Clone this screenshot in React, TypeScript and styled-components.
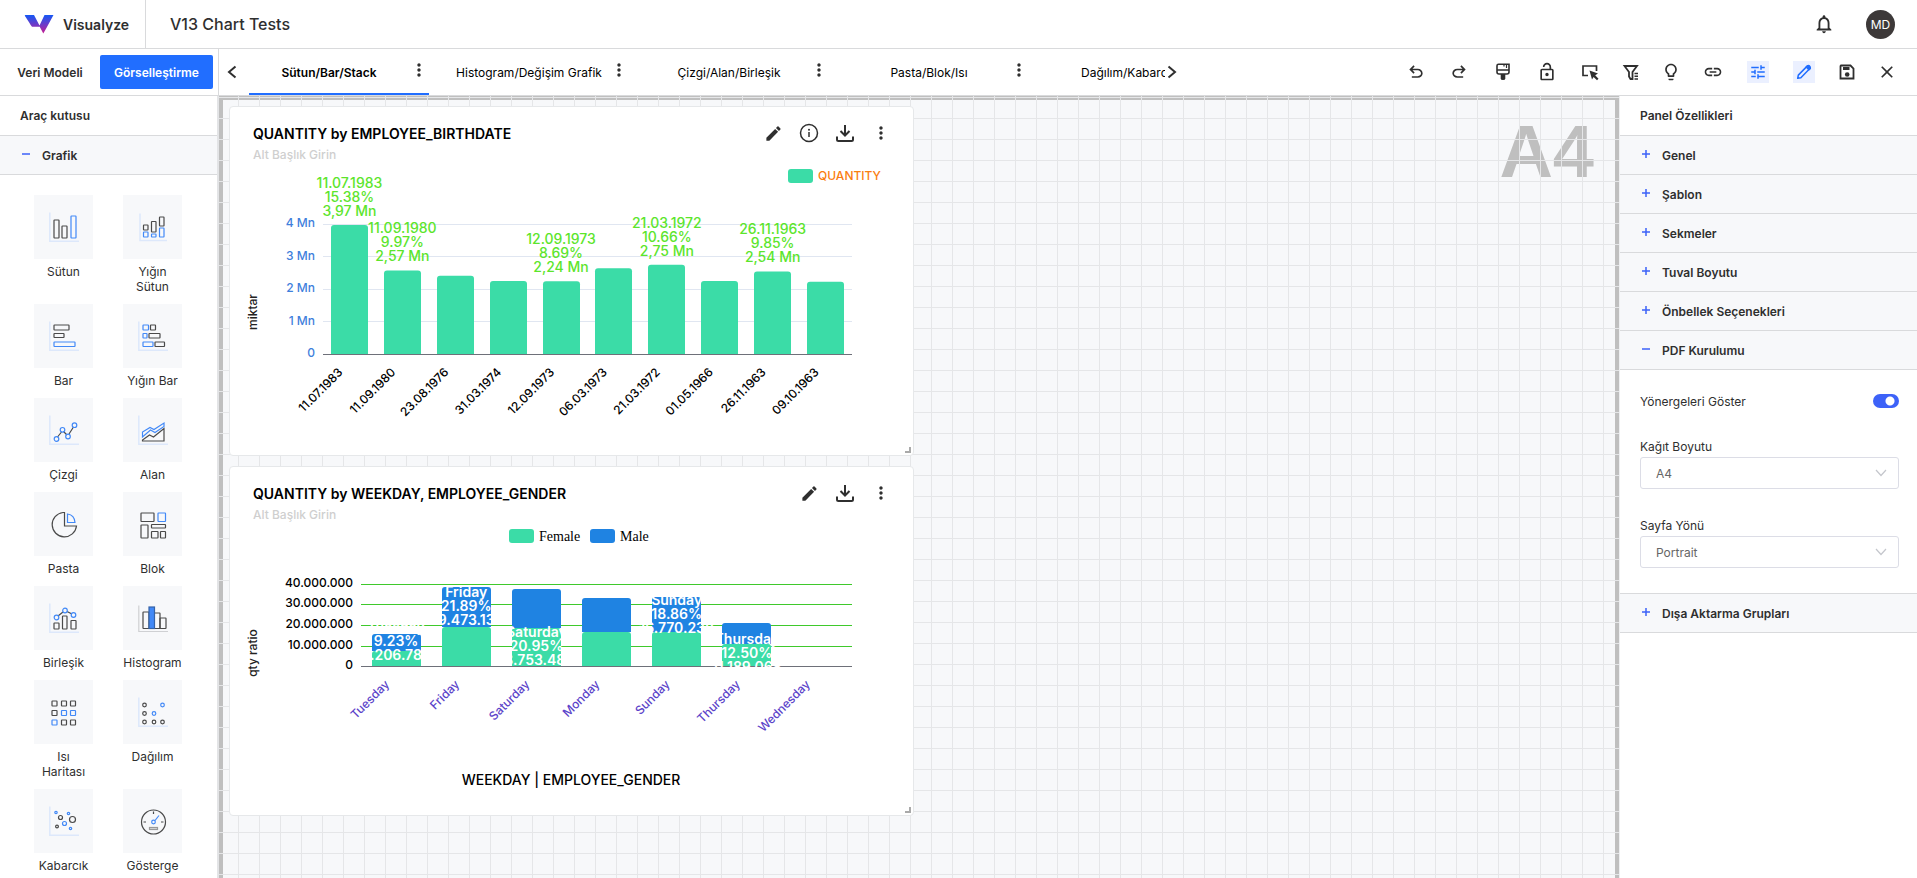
import React from 'react';
import styled, { createGlobalStyle, css } from 'styled-components';
import {
  MdClose,
  MdEdit,
  MdLightbulbOutline,
  MdLink,
  MdMoreVert,
  MdNotificationsNone,
  MdOutlineLockOpen,
  MdTune,
} from 'react-icons/md';

const font = 'Inter, "Liberation Sans", sans-serif';
const c = {
  text: '#2f2f2f',
  line: '#d9dadc',
  soft: '#f7f8fa',
  blue: '#216eff',
  accent: '#3d62f8',
  band: '#bfbfbf',
  grid: '#e5e6e8',
  green: '#3bdca7',
  male: '#1f83e2',
};

const GlobalStyle = createGlobalStyle`
  *, *::before, *::after { box-sizing: border-box; }
  body {
    margin: 0;
    font-family: ${font};
    font-size: 12px;
    color: ${c.text};
    background: #fff;
    overflow: hidden;
  }
  button, select, input { font: inherit; color: inherit; }
  h1, h2, h3, p, ul { margin: 0; padding: 0; }
`;

const Page = styled.div`
  display: flex;
  flex-direction: column;
  height: 100vh;
`;

/* ---------- header ---------- */

const Header = styled.header`
  display: flex;
  align-items: center;
  flex: none;
  height: 49px;
  border-bottom: 1px solid ${c.line};
`;

const Brand = styled.a`
  display: flex;
  align-items: center;
  gap: 9px;
  width: 146px;
  height: 100%;
  padding-left: 24px;
  border-right: 1px solid ${c.line};
  font-size: 14px;
  font-weight: 600;
  color: inherit;
  text-decoration: none;
`;

const DocumentTitle = styled.h1`
  flex: 1;
  padding-left: 24px;
  font-size: 16px;
  font-weight: 500;
`;

const Avatar = styled.button`
  width: 29px;
  height: 29px;
  margin: 0 22px 0 30px;
  padding: 0;
  border: 0;
  border-radius: 50%;
  background: #3d3939;
  color: #fff;
  font-size: 12px;
`;

/* ---------- toolbar ---------- */

const Toolbar = styled.div`
  display: flex;
  flex: none;
  height: 47px;
  border-bottom: 1px solid ${c.line};
`;

const ModeSwitch = styled.nav`
  display: flex;
  align-items: center;
  flex: none;
  width: 219px;
  border-right: 1px solid ${c.line};
`;

const ModeButton = styled.button<{ $active?: boolean }>`
  height: 34px;
  padding: 0;
  border: 0;
  border-radius: 2px;
  width: ${(p) => (p.$active ? 113 : 100)}px;
  background: ${(p) => (p.$active ? c.blue : 'transparent')};
  color: ${(p) => (p.$active ? '#fff' : c.text)};
  font-weight: 600;
`;

const IconButton = styled.button<{ $w?: number; $active?: boolean }>`
  display: flex;
  align-items: center;
  justify-content: center;
  flex: none;
  width: ${(p) => p.$w ?? 24}px;
  height: 24px;
  padding: 0;
  border: 0;
  background: transparent;
  color: ${(p) => (p.$active ? c.blue : c.text)};

  svg {
    flex: none;
    ${(p) =>
      p.$active &&
      css`
        padding: 2px;
        background: #ebf0ff;
      `}
  }
`;

const TabArea = styled.div`
  display: flex;
  align-items: center;
  flex: 1;
  min-width: 0;
  padding-left: 1px;
`;

const TabList = styled.div`
  display: flex;
  gap: 20px;
  height: 100%;
  width: 916px;
  margin: 0 -5px 0 5px;
  min-width: 0;
  overflow: hidden;
`;

const TabItem = styled.div<{ $active?: boolean }>`
  display: flex;
  align-items: center;
  position: relative;
  flex: none;
  width: 180px;
  border-bottom: 2px solid ${(p) => (p.$active ? c.blue : 'transparent')};
`;

const TabButton = styled.button<{ $active?: boolean }>`
  flex: 1;
  padding: 2px 20px 0 0;
  border: 0;
  background: transparent;
  color: #000;
  font-weight: ${(p) => (p.$active ? 600 : 400)};
  white-space: nowrap;
`;

const TabMenu = styled.button`
  position: absolute;
  right: 0;
  top: 11px;
  display: flex;
  padding: 0;
  border: 0;
  background: transparent;
`;

const Tools = styled.div`
  display: flex;
  align-items: center;
  flex: none;
  gap: 20px;
  padding: 0 20px;
`;

/* ---------- body ---------- */

const Body = styled.div`
  display: flex;
  flex: 1;
  min-height: 0;
`;

const Sidebar = styled.aside`
  flex: none;
  width: 219px;
  border-right: 2px solid #e3e4e6;
  overflow: hidden;
`;

const Properties = styled.aside`
  flex: none;
  width: 298px;
  border-left: 1px solid #eeeff1;
  overflow: hidden;
`;

const PanelTitle = styled.h2`
  height: 40px;
  padding-left: 20px;
  border-bottom: 1px solid ${c.line};
  font-size: 12px;
  font-weight: 600;
  line-height: 40px;
`;

const SectionButton = styled.button`
  display: flex;
  align-items: center;
  gap: 11px;
  width: 100%;
  height: 39px;
  padding: 0 0 0 21px;
  border: 0;
  border-bottom: 1px solid ${c.line};
  background: ${c.soft};
  font-weight: 600;
  text-align: left;
`;

const ChartTypes = styled.ul`
  display: grid;
  grid-template-columns: repeat(2, 59px);
  justify-content: center;
  column-gap: 30px;
  padding: 20px 1px 0 0;
  list-style: none;
`;

const ChartType = styled.button`
  display: flex;
  flex-direction: column;
  align-items: center;
  gap: 5px;
  width: 59px;
  padding: 0 0 10px;
  border: 0;
  background: transparent;
  line-height: 15px;
`;

const Tile = styled.span`
  display: grid;
  place-items: center;
  width: 59px;
  height: 64px;
  background: ${c.soft};
`;

const Settings = styled.div`
  padding: 20px 18px 25px 20px;
  border-bottom: 1px solid ${c.line};
`;

const SwitchRow = styled.label`
  display: flex;
  align-items: center;
  justify-content: space-between;
  height: 22px;
  margin-bottom: 26px;
`;

const Switch = styled.input`
  appearance: none;
  width: 26px;
  height: 14px;
  margin: 0;
  border-radius: 7px;
  background: radial-gradient(circle at 17px 7px, #fff 4px, ${c.accent} 5px);
`;

const Field = styled.div`
  position: relative;
  display: flex;
  flex-direction: column;
  gap: 1px;
  & + & { margin-top: 28px; }
  label { line-height: 18px; }
  svg { position: absolute; right: 12px; bottom: 11px; pointer-events: none; }
`;

const Select = styled.select`
  appearance: none;
  height: 32px;
  padding: 0 15px;
  border: 1px solid #dcdde6;
  border-radius: 3px;
  background: #fff;
  color: #666;
`;

/* ---------- canvas ---------- */

const Canvas = styled.main`
  position: relative;
  flex: 1;
  min-width: 0;
  display: grid;
  grid-template-columns: repeat(2, minmax(0, 1fr));
  align-content: start;
  gap: 10px;
  padding: 10px;
  background: ${c.soft};
  overflow: hidden;
`;

const Paper = styled.div`
  position: absolute;
  inset: 0;
  border: 4px solid ${c.band};
  border-bottom: 0;
  padding: 11px 21px 0;
  color: ${c.band};
  font: bold 74px/82px "Liberation Sans", sans-serif;
  text-align: right;
`;

const GridLines = styled.div`
  position: absolute;
  inset: 0;
  background-image: linear-gradient(${c.grid} 1px, transparent 1px),
    linear-gradient(90deg, ${c.grid} 1px, transparent 1px);
  background-size: 21px 21px;
  background-position: 19px 1px;
`;

const Card = styled.section`
  position: relative;
  grid-column: 1;
  border: 1px solid #e6e8ea;
  border-radius: 4px;
  background: #fff;
`;

const CardHead = styled.div`
  display: flex;
  justify-content: space-between;
  height: 56px;
  padding: 14px 20px 0 23px;
`;

const CardTitle = styled.h3`
  font-size: 14px;
  font-weight: 600;
  line-height: 26px;
  color: #000;
`;

const CardSubtitle = styled.p`
  font-size: 12px;
  font-weight: 500;
  line-height: 16px;
  color: #cfcfcf;
`;

const CardActions = styled.div`
  display: flex;
  gap: 12px;
`;

const Chart = styled.svg`
  display: block;
  width: 100%;
  height: 292px;
  font-family: ${font};
  font-weight: 500;
`;

const ResizeHandle = styled.span`
  position: absolute;
  right: 2px;
  bottom: 2px;
  width: 6px;
  height: 6px;
  border-right: 2px solid #aaa;
  border-bottom: 2px solid #aaa;
`;

/* ---------- icons ---------- */

const Logo = () => (
  <svg width="30" height="20" viewBox="0 0 30 20" aria-hidden="true">
    <defs>
      <linearGradient id="logo" x1="0" y1="0" x2="0" y2="1">
        <stop offset="0" stopColor="#1458f5" />
        <stop offset="0.55" stopColor="#7338c4" />
        <stop offset="1" stopColor="#c81e92" />
      </linearGradient>
    </defs>
    <path
      fill="url(#logo)"
      d="M1.500 1H10L15.500 11.500 20.500 1H29.500L22.300 14.200 19.300 19.500 15.700 12.800H8Q6.500 11 5.500 9L.8 1.800Q.7 1 1.500 1Z"
    />
  </svg>
);

const Symbol = ({ d, size = 20 }: { d: string; size?: number }) => (
  <svg width={size} height={size} viewBox="0 -960 960 960" fill="currentColor" aria-hidden="true">
    <path d={d} />
  </svg>
);

const undoPath =
  'M280-200v-80h284q63 0 109.500-40T720-420q0-60-46.500-100T564-560H312l104 104-56 56-200-200 200-200 56 56-104 104h252q97 0 163.500 63T800-420q0 94-66.500 157T564-200H280Z';
const redoPath =
  'M396-200q-97 0-163.500-63T160-420q0-94 66.500-157T396-640h252L544-744l56-56 200 200-200 200-56-56 104-104H396q-63 0-109.500 40T240-420q0 60 46.500 100T396-280h284v80H396Z';

const BrushIcon = () => (
  <svg width="18" height="20" viewBox="0 0 18 20" fill="none" stroke="currentColor" strokeWidth="1.600">
    <path d="M4.500 2.300H15V10Q15 12 13 12H5Q3 12 3 10V3.800Q3 2.300 4.500 2.300Z M3 8H15" />
    <path d="M10 2.300V4.500 M12.500 2.300V6" strokeWidth="1.200" />
    <path d="M6.700 12H11.300V16.500Q11.300 18 9 18 6.700 18 6.700 16.500Z" fill="currentColor" stroke="none" />
  </svg>
);

const SelectIcon = () => (
  <svg width="20" height="20" viewBox="0 0 20 20" fill="none" stroke="currentColor" strokeWidth="1.700">
    <path d="M8 13.500H3V4H16.500V9" />
    <path d="M9.500 8.500L18 11.500 15.200 13.300 18.500 16.700 17 18.300 13.600 14.900 12 17.500Z" fill="currentColor" stroke="none" />
  </svg>
);

const FilterIcon = () => (
  <svg width="20" height="20" viewBox="0 0 20 20" fill="none" stroke="currentColor" strokeWidth="1.800">
    <path d="M3.500 4H16L11.500 10V17H9.500L8 14.500V10Z" />
    <path d="M13.500 11.500H17 M13.500 14.200H17 M13.500 17H17" strokeWidth="1.500" />
  </svg>
);

const SaveIcon = () => (
  <svg width="20" height="20" viewBox="0 0 20 20" fill="none" stroke="currentColor" strokeWidth="1.800">
    <path d="M4 3.500H13.500L16.500 6.500V16.500H3.500V4Z" />
    <path d="M6 5H12.500V8H6Z" fill="currentColor" stroke="none" />
    <circle cx="10.200" cy="12.500" r="2.300" fill="currentColor" stroke="none" />
  </svg>
);

const PenIcon = () => (
  <svg width="22" height="22" viewBox="0 0 20 20" fill="none" stroke="currentColor" strokeWidth="1.700" strokeLinejoin="round">
    <path d="M3 17L3.700 13.500 13.800 3.200Q15 2.400 16.200 3.600 17.500 5 16.500 6.200L6.500 16.300Z" />
    <path d="M12.500 4.500L15.500 7.500 17 6 16 3.500 14.200 3Z" fill="currentColor" />
  </svg>
);

const InfoIcon = () => (
  <svg width="20" height="20" viewBox="0 0 20 20" fill="none" stroke="currentColor" strokeWidth="1.500">
    <circle cx="10" cy="10" r="8.500" />
    <path d="M10 9V14" />
    <circle cx="10" cy="6.800" r="1" fill="currentColor" stroke="none" />
  </svg>
);

const DownloadIcon = () => (
  <svg width="20" height="20" viewBox="0 0 20 20" fill="none" stroke="currentColor" strokeWidth="2">
    <path d="M10 2V12 M5.500 8L10 12.500 14.500 8" />
    <path d="M2 13.500V16.500Q2 18 3.500 18H16.500Q18 18 18 16.500V13.500" />
  </svg>
);

const ChevronIcon = ({ right }: { right?: boolean }) => (
  <svg width="12" height="14" viewBox="0 0 12 14" fill="none" stroke="currentColor" strokeWidth="2">
    <path d={right ? 'M2.500 1.500L9 7 2.500 12.500' : 'M9.500 1.500L3 7 9.500 12.500'} />
  </svg>
);

const CaretIcon = () => (
  <svg width="12" height="10" viewBox="0 0 12 10" fill="none" stroke="#c4c6cc" strokeWidth="1.200">
    <path d="M1 2L6 7.500 11 2" />
  </svg>
);

const ToggleIcon = ({ open }: { open?: boolean }) => (
  <svg width="10" height="12" viewBox="0 0 10 12" stroke={c.accent} strokeWidth="1.500" aria-hidden="true">
    <path d={open ? 'M1 5H9' : 'M1 5H9 M5 1V9'} />
  </svg>
);

const axisPath = <path d="M.8 .5V29.300H30" stroke="#dde8fb" strokeWidth="1.500" />;
const D = '#4a4a4a';
const B = '#4289f7';

const rects = (list: number[][], stroke: string) =>
  list.map(([x, y, w, h]) => (
    <rect key={`${x}-${y}`} x={x} y={y} width={w} height={h} rx="0.500" stroke={stroke} />
  ));
const dots = (list: number[][], stroke: string) =>
  list.map(([x, y, r]) => <circle key={`${x}-${y}`} cx={x} cy={y} r={r} stroke={stroke} />);

const chartTypes: { name: string; icon: React.ReactNode }[] = [
  {
    name: 'Sütun',
    icon: <>{axisPath}{rects([[5, 8, 5, 18], [13, 14, 5, 12]], D)}{rects([[22, 4, 5, 22]], B)}</>,
  },
  {
    name: 'Yığın Sütun',
    icon: (
      <>
        <path d="M2 1.500V28.500H29" stroke="#dde8fb" strokeWidth="1.500" />
        {rects([[5.500, 13, 4.500, 5], [13.500, 9.500, 4.500, 10.500], [21.500, 5, 4.500, 9]], D)}
        {rects([[5.500, 20, 4.500, 5], [13.500, 22, 4.500, 3], [21.500, 16, 4.500, 9]], B)}
      </>
    ),
  },
  {
    name: 'Bar',
    icon: <>{axisPath}{rects([[5, 4, 15, 5], [5, 12.500, 10, 4]], D)}{rects([[5, 21, 21, 4.500]], B)}</>,
  },
  {
    name: 'Yığın Bar',
    icon: (
      <>
        {axisPath}
        {rects([[12.500, 4, 5, 5], [11, 12.500, 11, 4.500], [17, 21, 9.500, 4.500]], D)}
        {rects([[5, 4, 5.500, 5], [5, 12.500, 4, 4.500], [5, 21, 10, 4.500]], B)}
      </>
    ),
  },
  {
    name: 'Çizgi',
    icon: (
      <>
        {axisPath}
        <path d="M8.500 22L12.500 17 M14.500 16.500L18 20 M20 19L24.500 12" stroke={D} />
        {dots([[7.500, 24, 2.300], [13.500, 14.800, 2.300], [19, 21.500, 2.300], [25.500, 10.200, 2.300]], B)}
      </>
    ),
  },
  {
    name: 'Alan',
    icon: (
      <>
        {axisPath}
        <path d="M4.500 22V17L12 12.500 16 14.500 26 8V11.500L17 17.500 12.500 15Z" stroke={B} />
        <path d="M4.500 26V25L11.500 20 15.500 22 26 13.500V26Z" stroke={D} />
      </>
    ),
  },
  {
    name: 'Pasta',
    icon: (
      <>
        <path d="M14 3.500A12.200 12.200 0 1 0 27.500 17H15.500V3.500Z" stroke={D} />
        <path d="M18.500 5Q25.500 6 26 13.500H18.500Z" stroke={B} />
      </>
    ),
  },
  {
    name: 'Blok',
    icon: (
      <>
        {rects([[3, 4, 13, 8.500], [3, 16, 7, 13], [13.500, 15.500, 14, 3.500], [13.500, 22.500, 6.500, 6.500], [22.500, 22.500, 5, 6.500]], D)}
        {rects([[20, 4, 7.500, 8.500]], B)}
      </>
    ),
  },
  {
    name: 'Birleşik',
    icon: (
      <>
        {axisPath}
        <path d="M9 13L14 9 M18 8.500L23 11" stroke={D} />
        {rects([[5, 20, 5, 6], [13.500, 13, 4.500, 13], [22, 17.500, 5, 8.500]], D)}
        {dots([[7.500, 14.500, 2.300], [16, 7.500, 2.300], [24.500, 12, 2.300]], B)}
      </>
    ),
  },
  {
    name: 'Histogram',
    icon: (
      <>
        <path d="M.8 2.500V28.500H30" stroke="#cfd0d3" />
        {rects([[5, 9, 6, 16.500], [16, 10, 6, 15.500], [22, 15, 6, 10.500]], D)}
        <rect x="11" y="4" width="5.500" height="21.500" fill={B} stroke="#3563a8" />
      </>
    ),
  },
  {
    name: 'Isı Haritası',
    icon: (
      <>
        {rects([[3, 4, 5, 5], [12.500, 4, 5, 5], [21.500, 4, 5, 5], [3, 13.500, 5, 5], [12.500, 23, 5, 5], [21.500, 23, 5, 5]], D)}
        {rects([[12.500, 13.500, 5, 5], [21.500, 13.500, 5, 5], [3, 23, 5, 5]], B)}
      </>
    ),
  },
  {
    name: 'Dağılım',
    icon: (
      <>
        {axisPath}
        {dots([[6.500, 8, 1.800], [6.500, 16.500, 1.800], [6.500, 25, 1.800], [16, 25, 1.800], [24.500, 25, 1.800]], D)}
        {dots([[24.500, 8, 1.800], [16, 16.500, 1.800]], B)}
      </>
    ),
  },
  {
    name: 'Kabarcık',
    icon: (
      <>
        {axisPath}
        {dots([[11.500, 11.500, 2], [23.500, 13.500, 3], [8, 20.500, 1.400]], D)}
        {dots([[7, 6.500, 1.200], [19.500, 7.500, 1.200], [15.500, 17.500, 2], [21.500, 22.500, 1.200]], B)}
      </>
    ),
  },
  {
    name: 'Gösterge',
    icon: (
      <>
        <circle cx="15.500" cy="16" r="12" stroke={D} />
        <path d="M15.500 5.500V8 M5.500 16H8 M23 16H25.500" stroke={D} />
        <path d="M17 14.500L21 9.500" stroke={B} />
        <circle cx="15.500" cy="16" r="1.800" stroke={B} />
        <rect x="11.500" y="21.500" width="8" height="2" fill="#ddd" stroke="#999" />
      </>
    ),
  },
];

/* ---------- charts ---------- */

const birthdates: { date: string; value: number; label?: string[] }[] = [
  { date: '11.07.1983', value: 3.97, label: ['15.38%', '3,97 Mn'] },
  { date: '11.09.1980', value: 2.57, label: ['9.97%', '2,57 Mn'] },
  { date: '23.08.1976', value: 2.41 },
  { date: '31.03.1974', value: 2.25 },
  { date: '12.09.1973', value: 2.24, label: ['8.69%', '2,24 Mn'] },
  { date: '06.03.1973', value: 2.64 },
  { date: '21.03.1972', value: 2.75, label: ['10.66%', '2,75 Mn'] },
  { date: '01.05.1966', value: 2.25 },
  { date: '26.11.1963', value: 2.54, label: ['9.85%', '2,54 Mn'] },
  { date: '09.10.1963', value: 2.22 },
];

const topRounded = (x: number, y: number, w: number, h: number) =>
  `M${x} ${y + h}V${y + 3}q0-3 3-3h${w - 6}q3 0 3 3V${y + h}Z`;

function BirthdateChart() {
  const left = 93;
  const right = 622;
  const base = 191;
  const unit = 32.5;
  const step = (right - left) / birthdates.length;
  return (
    <Chart viewBox="0 0 683 292" role="img" aria-label="QUANTITY by EMPLOYEE_BIRTHDATE">
      <rect x="558" y="6" width="25" height="14" rx="3" fill={c.green} />
      <text x="588" y="17" fontSize="12" fill="#fa7d0f">QUANTITY</text>
      {[0, 1, 2, 3, 4].map((v) => (
        <g key={v}>
          {v > 0 && (
            <path d={`M${left} ${Math.floor(base - v * unit) + 0.5}H${right}`} stroke="#e0e6f1" />
          )}
          <text x="85" y={base - v * unit + 3} fontSize="12" fill="#3f80dc" textAnchor="end">
            {v ? `${v} Mn` : '0'}
          </text>
        </g>
      ))}
      {birthdates.map((b, i) => {
        const mid = left + step * (i + 0.5);
        const h = b.value * unit;
        return (
          <path key={b.date} d={topRounded(Math.round(mid - 18.5), base - h, 37, h)} fill={c.green} />
        );
      })}
      <path d={`M${left} ${base + 0.5}H${right}`} stroke="#6e7079" />
      {birthdates.map((b, i) => {
        const mid = left + step * (i + 0.5);
        const top = base - b.value * unit;
        const end = mid - 6;
        return (
          <g key={b.date}>
            {b.label &&
              [b.date, ...b.label].map((t, n) => (
                <text key={t} x={mid} y={top - 37 + n * 14} fontSize="14" fill="#5ce52c" textAnchor="middle">
                  {t}
                </text>
              ))}
            <text
              x={end}
              y={base + 19}
              transform={`rotate(-45 ${end} ${base + 19})`}
              fontSize="12"
              fill="#000"
              textAnchor="end"
            >
              {b.date}
            </text>
          </g>
        );
      })}
      <text x="27" y="149" transform="rotate(-90 27 149)" fontSize="12" fill="#222" textAnchor="middle">
        miktar
      </text>
    </Chart>
  );
}

const weekdays: { day: string; top: number; split: number; base?: number; label?: string[] }[] = [
  { day: 'Tuesday', top: 111, split: 128, base: 109, label: ['9.23%', '8.206.788'] },
  { day: 'Friday', top: 64, split: 104, base: 74, label: ['21.89%', '19.473.131'] },
  { day: 'Saturday', top: 66, split: 105, base: 114, label: ['20.95%', '18.753.488'] },
  { day: 'Monday', top: 75, split: 109 },
  { day: 'Sunday', top: 74, split: 109, base: 82, label: ['18.86%', '16.770.238'] },
  { day: 'Thursday', top: 100, split: 121, base: 121, label: ['12.50%', '11.189.068'] },
  { day: 'Wednesday', top: 143, split: 143 },
];

function WeekdayChart() {
  const left = 131;
  const right = 622;
  const base = 143;
  const step = (right - left) / weekdays.length;
  const lines = [
    { y: 61, label: '40.000.000' },
    { y: 81, label: '30.000.000' },
    { y: 102, label: '20.000.000' },
    { y: 123, label: '10.000.000' },
    { y: base, label: '0' },
  ];
  return (
    <Chart viewBox="0 0 683 292" role="img" aria-label="QUANTITY by WEEKDAY, EMPLOYEE_GENDER">
      <rect x="279" y="6" width="25" height="14" rx="3" fill={c.green} />
      <rect x="360" y="6" width="25" height="14" rx="3" fill={c.male} />
      <g fontFamily='"Liberation Serif", serif' fontWeight="400" fontSize="14" fill="#000">
        <text x="309" y="18">Female</text>
        <text x="390" y="18">Male</text>
      </g>
      {lines.map((l) => (
        <g key={l.label}>
          {l.y < base && <path d={`M${left} ${l.y + 0.5}H${right}`} stroke="#3fc92c" />}
          <text x="123" y={l.y + 3} fontSize="12" fill="#000" textAnchor="end">
            {l.label}
          </text>
        </g>
      ))}
      {weekdays.map((d, i) => {
        const x = Math.round(left + step * (i + 0.5) - 24.5);
        return d.top < base ? (
          <g key={d.day}>
            <path d={topRounded(x, d.top, 49, d.split - d.top)} fill={c.male} />
            <path d={topRounded(x, d.split, 49, base - d.split)} fill={c.green} />
          </g>
        ) : null;
      })}
      <path d={`M${left} ${base + 0.5}H${right}`} stroke="#6e7079" />
      {weekdays.map((d, i) => {
        const mid = left + step * (i + 0.5);
        const end = mid - 6;
        return (
          <g key={d.day}>
            {d.label &&
              [d.day, ...d.label].map((t, n) => (
                <text
                  key={t}
                  x={mid}
                  y={(d.base ?? 0) + n * 14}
                  fontSize="14"
                  fontWeight="600"
                  fill="#fff"
                  textAnchor="middle"
                >
                  {t}
                </text>
              ))}
            <text
              x={end}
              y={base + 19}
              transform={`rotate(-45 ${end} ${base + 19})`}
              fontSize="12"
              fill="#5b43c9"
              textAnchor="end"
            >
              {d.day}
            </text>
          </g>
        );
      })}
      <text x="27" y="130" transform="rotate(-90 27 130)" fontSize="12" fill="#222" textAnchor="middle">
        qty ratio
      </text>
      <text x="341" y="262" fontSize="14" fill="#000" textAnchor="middle">
        WEEKDAY | EMPLOYEE_GENDER
      </text>
    </Chart>
  );
}

function ChartCard(props: { title: string; info?: boolean; children: React.ReactNode }) {
  return (
    <Card>
      <CardHead>
        <div>
          <CardTitle>{props.title}</CardTitle>
          <CardSubtitle>Alt Başlık Girin</CardSubtitle>
        </div>
        <CardActions>
          <IconButton aria-label="Düzenle"><MdEdit size={19} /></IconButton>
          {props.info && <IconButton aria-label="Bilgi"><InfoIcon /></IconButton>}
          <IconButton aria-label="İndir"><DownloadIcon /></IconButton>
          <IconButton aria-label="Menü"><MdMoreVert size={20} /></IconButton>
        </CardActions>
      </CardHead>
      {props.children}
      <ResizeHandle />
    </Card>
  );
}

const tabs = [
  'Sütun/Bar/Stack',
  'Histogram/Değişim Grafik',
  'Çizgi/Alan/Birleşik',
  'Pasta/Blok/Isı',
  'Dağılım/Kabarcık',
];

const tools: { name: string; w: number; active?: boolean; icon: React.ReactNode }[] = [
  { name: 'Geri al', w: 22, icon: <Symbol d={undoPath} /> },
  { name: 'Yinele', w: 24, icon: <Symbol d={redoPath} /> },
  { name: 'Tema', w: 24, icon: <BrushIcon /> },
  { name: 'Kilit', w: 24, icon: <MdOutlineLockOpen size={20} /> },
  { name: 'Seç', w: 22, icon: <SelectIcon /> },
  { name: 'Filtre', w: 20, icon: <FilterIcon /> },
  { name: 'Öneri', w: 20, icon: <MdLightbulbOutline size={20} /> },
  { name: 'Bağlantı', w: 24, icon: <MdLink size={20} /> },
  { name: 'Özellikler', w: 26, active: true, icon: <MdTune size={22} /> },
  { name: 'Düzenle', w: 26, active: true, icon: <PenIcon /> },
  { name: 'Kaydet', w: 20, icon: <SaveIcon /> },
  { name: 'Kapat', w: 20, icon: <MdClose size={20} /> },
];

const sections = ['Genel', 'Şablon', 'Sekmeler', 'Tuval Boyutu', 'Önbellek Seçenekleri'];

export default function App() {
  return (
    <Page>
      <GlobalStyle />
      <Header>
        <Brand href="#">
          <Logo />
          Visualyze
        </Brand>
        <DocumentTitle>V13 Chart Tests</DocumentTitle>
        <IconButton aria-label="Bildirimler"><MdNotificationsNone size={22} /></IconButton>
        <Avatar>MD</Avatar>
      </Header>
      <Toolbar>
        <ModeSwitch>
          <ModeButton>Veri Modeli</ModeButton>
          <ModeButton $active>Görselleştirme</ModeButton>
        </ModeSwitch>
        <TabArea>
          <IconButton aria-label="Önceki"><ChevronIcon /></IconButton>
          <TabList>
            {tabs.map((t, i) => (
              <TabItem key={t} $active={i === 0}>
                <TabButton $active={i === 0}>{t}</TabButton>
                <TabMenu aria-label={`${t} menüsü`}><MdMoreVert size={20} /></TabMenu>
              </TabItem>
            ))}
          </TabList>
          <IconButton aria-label="Sonraki"><ChevronIcon right /></IconButton>
        </TabArea>
        <Tools>
          {tools.map((t) => (
            <IconButton key={t.name} aria-label={t.name} $w={t.w} $active={t.active}>
              {t.icon}
            </IconButton>
          ))}
        </Tools>
      </Toolbar>
      <Body>
        <Sidebar>
          <PanelTitle>Araç kutusu</PanelTitle>
          <SectionButton><ToggleIcon open />Grafik</SectionButton>
          <ChartTypes>
            {chartTypes.map((t) => (
              <li key={t.name}>
                <ChartType>
                  <Tile>
                    <svg width="30" height="30" viewBox="0 0 30 30" fill="none" strokeWidth="1.200">
                      {t.icon}
                    </svg>
                  </Tile>
                  {t.name}
                </ChartType>
              </li>
            ))}
          </ChartTypes>
        </Sidebar>
        <Canvas>
          <Paper>A4</Paper>
          <GridLines />
          <ChartCard title="QUANTITY by EMPLOYEE_BIRTHDATE" info>
            <BirthdateChart />
          </ChartCard>
          <ChartCard title="QUANTITY by WEEKDAY, EMPLOYEE_GENDER">
            <WeekdayChart />
          </ChartCard>
        </Canvas>
        <Properties>
          <PanelTitle>Panel Özellikleri</PanelTitle>
          {sections.map((s) => (
            <SectionButton key={s}><ToggleIcon />{s}</SectionButton>
          ))}
          <SectionButton><ToggleIcon open />PDF Kurulumu</SectionButton>
          <Settings>
            <SwitchRow>
              Yönergeleri Göster
              <Switch type="checkbox" role="switch" defaultChecked />
            </SwitchRow>
            <Field>
              <label htmlFor="paper">Kağıt Boyutu</label>
              <Select id="paper" defaultValue="A4"><option>A4</option></Select>
              <CaretIcon />
            </Field>
            <Field>
              <label htmlFor="orientation">Sayfa Yönü</label>
              <Select id="orientation" defaultValue="Portrait"><option>Portrait</option></Select>
              <CaretIcon />
            </Field>
          </Settings>
          <SectionButton><ToggleIcon />Dışa Aktarma Grupları</SectionButton>
        </Properties>
      </Body>
    </Page>
  );
}
